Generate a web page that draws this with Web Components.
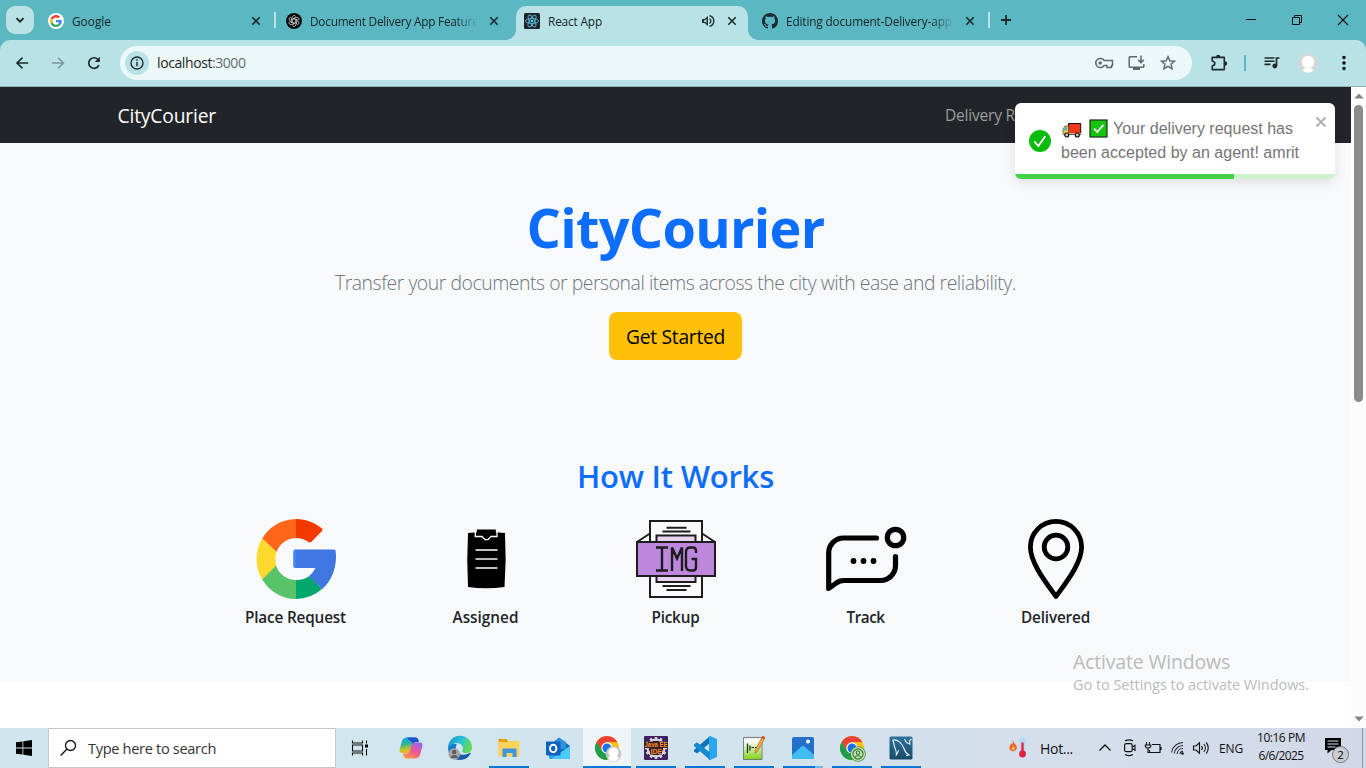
<!DOCTYPE html>
<html lang="en">
<head>
<meta charset="utf-8">
<title>React App</title>
<style>
html,body{margin:0;height:768px;overflow:hidden;background:#fff}
body{font-family:"Open Sans","Noto Sans",sans-serif;color:#1f1f1f}
</style>
</head>
<body>
<desktop-screen></desktop-screen>
<script>
const define = (name, html, after) => {
  const t = document.createElement('template');
  t.innerHTML = html;
  customElements.define(name, class extends HTMLElement {
    connectedCallback() {
      if (this.shadowRoot) return;
      this.attachShadow({mode: 'open'}).appendChild(t.content.cloneNode(true));
      if (after) after(this, this.shadowRoot);
    }
  });
};

/* Text run tracked so that it fills a given width */
define('fit-text', `<style>:host{display:inline-block;white-space:nowrap;flex:none}span{display:inline-block}</style><span><slot></slot></span>`, (el, r) => {
  const w = +el.getAttribute('w'), s = r.querySelector('span');
  const n = el.textContent.length;
  const nat = s.getBoundingClientRect().width;
  if (w && nat) { s.style.letterSpacing = ((w - nat) / n).toFixed(3) + 'px'; el.style.width = w + 'px'; }
});

const G4 = '<path fill="#ea4335" d="M24 9.5c3.5 0 6.7 1.2 9.2 3.6l6.9-6.9C35.9 2.4 30.5 0 24 0 14.6 0 6.5 5.4 2.6 13.2l8 6.2C12.4 13.7 17.7 9.5 24 9.5z"/><path fill="#4285f4" d="M47 24.6c0-1.6-.2-3.100-.4-4.600H24v9h12.900c-.6 3-2.300 5.500-4.800 7.200l7.700 6C44.400 38 47 32 47 24.600z"/><path fill="#fbbc05" d="M10.500 28.600a14.500 14.500 0 010-9.200l-8-6.200a24 24 0 000 21.600z"/><path fill="#34a853" d="M24 48c6.500 0 11.900-2.100 15.900-5.800l-7.700-6c-2.200 1.500-4.900 2.300-8.200 2.300-6.300 0-11.600-4.200-13.500-9.900l-8 6.200C6.500 42.600 14.600 48 24 48z"/>';
const CHROME = '<circle cx="12" cy="12" r="12" fill="#fbc116"/><path d="M1.600 6A12 12 0 0 1 22.400 6H12L7 14.800z" fill="#ea4335"/><path d="M1.600 6A12 12 0 0 0 12 24l5-9-5 2-5-2.300z" fill="#1e9e4a"/><circle cx="12" cy="12" r="5.700" fill="#fff"/><circle cx="12" cy="12" r="4.500" fill="#1a73e8"/>';
const rot = (n, step, s) => Array.from({length:n}, (_,i) => `<g transform="rotate(${i*step} 12 12)">${s}</g>`).join('');
const ICONS = {
  down: [12,12,'<path d="M2.500 4.200L6 7.700l3.500-3.500" fill="none" stroke="#1c2526" stroke-width="1.900"/>'],
  gfav: [16,16,`<circle cx="8" cy="8" r="8" fill="#fff"/><g transform="translate(2 2) scale(.25)">${G4}</g>`],
  oai: [16,16,`<circle cx="8" cy="8" r="8" fill="#0a0a0a"/><g transform="scale(.6667)" fill="none" stroke="#d8d8d8" stroke-width="1.100">${rot(6,60,'<path d="M9.200 10.300V6.800a3 3 0 0 1 5.200-2l.2.200M14.800 10.400L11 8.200 14.300 6.300"/>')}</g>`],
  react: [16,16,'<rect width="16" height="16" rx="1.500" fill="#20232a"/><g fill="none" stroke="#58b6d0" stroke-width=".9"><ellipse cx="8" cy="8" rx="6.600" ry="2.500"/><ellipse cx="8" cy="8" rx="6.600" ry="2.500" transform="rotate(60 8 8)"/><ellipse cx="8" cy="8" rx="6.600" ry="2.500" transform="rotate(120 8 8)"/></g><circle cx="8" cy="8" r="1.300" fill="#61dafb"/>'],
  github: [16,16,'<path fill="#1d2b33" d="M8 0C3.580 0 0 3.580 0 8c0 3.540 2.290 6.530 5.470 7.590.4.070.55-.17.55-.38 0-.19-.010-.82-.010-1.490-2.010.37-2.530-.49-2.690-.94-.090-.23-.48-.94-.82-1.130-.28-.15-.68-.52-.010-.53.63-.010 1.080.58 1.230.82.72 1.210 1.870.87 2.330.66.070-.52.28-.87.51-1.070-1.780-.2-3.640-.89-3.640-3.950 0-.87.31-1.590.82-2.150-.080-.2-.36-1.020.080-2.120 0 0 .67-.21 2.200.82.64-.18 1.320-.27 2-.27s1.360.090 2 .27c1.530-1.040 2.200-.82 2.200-.82.44 1.100.16 1.920.080 2.120.51.56.82 1.270.82 2.150 0 3.070-1.870 3.750-3.650 3.950.29.25.54.73.54 1.480 0 1.070-.010 1.930-.010 2.200 0 .21.15.46.55.38A8.010 8.010 0 0 0 16 8c0-4.420-3.580-8-8-8z"/>'],
  x: [12,12,'<path d="M2.300 2.300l7.400 7.400M9.700 2.300L2.300 9.700" stroke="#1c2a2c" stroke-width="1.600"/>'],
  spk: [14,14,'<path d="M1 5h2.500L7 2v10L3.500 9H1z" fill="#1f3336"/><path d="M3 6.300h1l1.500-1.500v4.400L4 7.700H3z" fill="#b8e2e5"/><path d="M8.500 4.500a3 3 0 0 1 0 5M8.500 1.800a5.300 5.300 0 0 1 0 10.400" fill="none" stroke="#1f3336" stroke-width="1.400"/>'],
  plus: [12,12,'<path d="M6 1v10M1 6h10" stroke="#1c2a2c" stroke-width="1.800"/>'],
  min: [12,12,'<path d="M1 5.500h10" stroke="#111" stroke-width="1"/>'],
  restore: [12,12,'<path d="M1.500 3.500h7v7h-7zM3.500 3.500v-2h7v7h-2" fill="none" stroke="#111"/>'],
  wclose: [12,12,'<path d="M1 1l10 10M11 1L1 11" stroke="#111" stroke-width="1.100"/>'],
  back: [16,16,'<path d="M14.200 8H3.200M8.500 2.700L3 8l5.500 5.300" fill="none" stroke="#1f2b2d" stroke-width="1.600"/>'],
  fwd: [16,16,'<path d="M2 8h11M8 2.700L13.500 8 8 13.300" fill="none" stroke="#7b979b" stroke-width="1.500"/>'],
  reload: [16,16,'<path d="M12.900 10.200A5.300 5.300 0 1 1 12.400 5" fill="none" stroke="#1f2b2d" stroke-width="1.700"/><path d="M13.900 1.800V7H8.700z" fill="#1f2b2d"/>'],
  info: [24,24,'<circle cx="12" cy="12" r="12" fill="#b8e2e5"/><circle cx="12" cy="12" r="6" fill="none" stroke="#203033" stroke-width="1.400"/><path d="M12 11v4.300M12 8.200v1.600" stroke="#203033" stroke-width="1.500"/>'],
  key: [20,14,'<path d="M10.200 4.500A4.600 4.600 0 1 0 10.200 9.500H13v2h4.500v-2H18.500v-5z" fill="none" stroke="#5a696c" stroke-width="1.500"/><circle cx="6.200" cy="7" r="1.700" fill="#5a696c"/>'],
  install: [18,16,'<path d="M9 1.700H2A1 1 0 0 0 1.200 2.500v9a1 1 0 0 0 .8.800h13a1 1 0 0 0 .8-.8V9" fill="none" stroke="#5a696c" stroke-width="1.500"/><path d="M5 12.500h7v2.500H5z" fill="#5a696c"/><path d="M13 .5v7M10.100 4.800L13 7.700l2.900-2.900" fill="none" stroke="#5a696c" stroke-width="1.500"/>'],
  star: [16,16,'<path d="M8 1.600l1.900 4.200 4.600.4-3.500 3 1.100 4.500L8 11.300l-4.100 2.400L5 9.200l-3.500-3 4.600-.4z" fill="none" stroke="#5a696c" stroke-width="1.400"/>'],
  ext: [18,18,'<path d="M2.200 3.400H14.300V15.600H2.200V12q2.600-.5 2.600-2.500T2.200 7z" fill="none" stroke="#1f2b2d" stroke-width="1.600" stroke-linejoin="round"/><path d="M6 3a2.200 2.200 0 0 1 4.400 0zM15 7.300a2.200 2.200 0 0 1 0 4.400z" fill="#1f2b2d"/>'],
  media: [16,14,'<path d="M.5 2h10M.5 5.200h10M.5 8.400h6" stroke="#1f2b2d" stroke-width="1.600"/><path d="M12.500 10V2H15.500" fill="none" stroke="#1f2b2d" stroke-width="1.700"/><circle cx="10.800" cy="10" r="2.400" fill="#1f2b2d"/>'],
  avatar: [20,20,'<circle cx="10" cy="10" r="10" fill="#d6d6d6"/><circle cx="10" cy="9" r="6.200" fill="#fff"/><path d="M4.500 17.800c1-4.500 10-4.500 11 0A9.500 9.500 0 0 1 4.500 17.800z" fill="#fff"/>'],
  dots: [6,16,'<circle cx="3" cy="2.500" r="1.700"/><circle cx="3" cy="8" r="1.700"/><circle cx="3" cy="13.500" r="1.700"/>'],
  ok: [22,22,'<circle cx="11" cy="11" r="11" fill="#07bc0c"/><path d="M5.300 11.300l4 4.700 7-9.800" fill="none" stroke="#fff" stroke-width="1.900"/>'],
  truck: [20,16,'<path d="M6.500 1.500h12.200v11H6.500z" fill="#f03a17" stroke="#111"/><path d="M1 7L3 4h3.500v8.500H1z" fill="#ffc83d" stroke="#555" stroke-width=".8"/><path d="M1.800 7.500l1.700-2.500H5v3.500H1.800z" fill="#39b9e6"/><path d="M1 11h18v1.600H1z" fill="#d3ab82"/><circle cx="4.700" cy="13" r="2" fill="#ccc" stroke="#111" stroke-width="1.200"/><circle cx="15.300" cy="13" r="2" fill="#ccc" stroke="#111" stroke-width="1.200"/>'],
  check: [20,20,'<rect x="1" y="1" width="17" height="17" fill="#16c60c" stroke="#1c301c" stroke-width="1.200"/><path d="M5 9.500l3.200 3.500 6.200-7.200" fill="none" stroke="#fff" stroke-width="1.800"/>'],
  tclose: [12,12,'<path d="M1.500 1.500l9 9M10.500 1.500l-9 9" stroke="#b2b2b2" stroke-width="2.100"/>'],
  google: [80,80,`<g>
    <path d="M40 0A40 40 0 0 0 6.200 19.500L20.500 33A21 21 0 0 1 40 19z" fill="#ff6619"/>
    <path d="M40 0C50 0 59.500 4 66 9.500Q67 10.800 66 12L55.500 22.800Q54 24 52.500 23A22 22 0 0 0 40 19z" fill="#f23a00"/>
    <path d="M6.200 19.500A40 40 0 0 0 6.200 60.500L20.500 47A22 22 0 0 1 20.500 33z" fill="#ffda2d"/>
    <path d="M6.200 60.500A40 40 0 0 0 40 80V61A21 21 0 0 1 20 46.500z" fill="#59c36a"/>
    <path d="M40 80A40 40 0 0 0 66 70L53.500 57A22 22 0 0 1 40 61z" fill="#00a66c"/>
    <path d="M39.500 30.500H78Q79.500 30.500 79.700 32C81.500 47 76 62 66 70.200L53 57Q57 54 59.500 49H39.500Q37.500 49 37.500 47V32.500Q37.500 30.500 39.500 30.500z" fill="#4175df"/>
    <path d="M40 30.500h-.5Q37.500 30.500 37.500 32.500V47Q37.500 49 39.500 49h.5z" fill="#4086f4"/></g>`],
  clip: [80,80,'<path d="M22 14Q40 12 59 14Q60.500 41 58.500 68Q40 70.500 22 68Q20.500 41 22 14z"/><path d="M29.300 11v6.500H36l3 3.200h3l3-3.200h6V11" fill="none" stroke="#fff" stroke-width="1.300"/><path d="M30.800 10.500h19v5.500H44l-3 2.800h-1L37 16h-6.200z"/><path d="M29.500 31h22M29.500 49h22" stroke="#fff" stroke-width="1.600"/><path d="M29.500 40h22" stroke="#ccc" stroke-width="1.800"/>'],
  img: [80,80,'<g stroke="#1d1d1d" stroke-width="2" fill="none"><path d="M14 14.500L1 23M66 14.500L79 23"/><path d="M14 2h52v76H14z" fill="#fafafc"/><path d="M20.500 16.500h39v46.500h-39z" fill="#e8d4f2"/><path d="M30.500 8.700h20M26.500 12.500h28M26.500 67h28M30.500 71h20"/><path d="M1 23h78v34H1z" fill="#bd87de"/><path d="M20 28.500h12M20 51.500h12M26 28.500v23M36 52V28.500l5 11 5-11V52M60 34V32q0-3.500-3-3.500h-2.500Q50 28.500 50 33v14q0 4.500 4.500 4.500H57q3 0 3-3.500v-8h-4.500" stroke-width="2.400"/></g>'],
  track: [80,80,'<g fill="none" stroke="#000" stroke-width="5.200" stroke-linecap="round" stroke-linejoin="round"><path d="M50.500 19H17.500A14.800 14.800 0 0 0 2.700 34V69.500L11 63.500Q14 61.500 18 61.500H54.500A15 15 0 0 0 69.500 46.500V37.500"/><circle cx="69.500" cy="18.500" r="8.200"/></g><circle cx="27.500" cy="42" r="2.900"/><circle cx="37.500" cy="42" r="2.900"/><circle cx="47.500" cy="42" r="2.900"/>'],
  pin: [80,80,'<g fill="none" stroke="#000" stroke-width="4.800"><path d="M40 77.500C32 66 14.400 45 14.400 28a25.600 25.600 0 0 1 51.200 0C65.600 45 48 66 40 77.500z" stroke-linejoin="round"/><circle cx="40" cy="28" r="11.800"/></g>'],
  win: [16,16,'<path d="M0 2.300l6.500-.9v6.200H0zM7.300 1.300L16 0v7.600H7.300zM0 8.400h6.500v6.200L0 13.700zM7.300 8.400H16V16l-8.700-1.300z"/>'],
  search: [18,18,'<circle cx="10.500" cy="6.500" r="5" fill="none" stroke="#111" stroke-width="1.300"/><path d="M6.800 10.200L.6 16.500" stroke="#111" stroke-width="1.300"/>'],
  task: [18,16,'<path d="M.5 .5v2.500h10V.5M.5 15.500V13h10v2.500M.5 5h10v6H.5zM14.500 .5v3M14.500 9v6.500" fill="none" stroke="#111" stroke-width="1.100"/><path d="M13 4.500h3v3h-3z"/>'],
  copilot: [24,24,'<defs><linearGradient id="a" x1="0" y1="0" x2=".2" y2="1"><stop offset="0" stop-color="#16a6e8"/><stop offset=".45" stop-color="#2bb39a"/><stop offset=".8" stop-color="#c3c629"/><stop offset="1" stop-color="#f0b429"/></linearGradient><linearGradient id="b" x1=".7" y1="0" x2=".2" y2="1"><stop offset="0" stop-color="#9d62ec"/><stop offset=".5" stop-color="#ef5792"/><stop offset="1" stop-color="#ff9a3f"/></linearGradient></defs><path d="M8 1.500h8.500q2 0 2.600 2l.8 2.500h-3q-2 0-2.600 2l-2 6.500q-.8 2.500-3.200 2.500H3q-3 0-2.300-4L3 5Q4.200 1.500 8 1.500z" fill="url(#a)"/><path d="M8 1.500h8.500q2 0 2.600 2l.8 2.500h-3q-2 0-2.600 2L14 9q-.6-3-2.500-4T8 1.500z" fill="#1b4ed1"/><path d="M16 22.500H7.500q-2 0-2.600-2L4 17.500h4q2 0 2.600-2l2-6.500q.8-2.500 3.200-2.500H21q3 0 2.300 4L21 19q-1.200 3.500-5 3.500z" fill="url(#b)"/>'],
  edge: [24,24,'<defs><linearGradient id="e" x1="0" y1="0" x2="1" y2=".3"><stop offset="0" stop-color="#1a8fd8"/><stop offset=".6" stop-color="#2cc4d4"/><stop offset="1" stop-color="#62d957"/></linearGradient><linearGradient id="f" x2="1" y2="1"><stop stop-color="#1b84d6"/><stop offset="1" stop-color="#134f9c"/></linearGradient></defs><path d="M0 12C1 8 5 6.500 9 8.500 6.500 11 7.500 17 13 18.500q5 1 8.500-1.500c1-.5 1.500 0 1 .8A12 12 0 0 1 12 24 12 12 0 0 1 0 12z" fill="url(#f)"/><path d="M0 12A12 12 0 0 1 24 11.500c0 4-3 5.500-6 5.500s-4.500-1-3.500-2.500C16.500 10 12 6.500 7.500 7 3 8 .5 11 0 12z" fill="url(#e)"/><circle cx="6.200" cy="18" r="5.800" fill="#a5a5a5"/><circle cx="6.200" cy="16" r="2.200" fill="#5b5b5b"/><path d="M2.500 22c.5-4 7-4 7.500 0z" fill="#5b5b5b"/>'],
  folder: [24,24,'<path d="M1.500 3h8l1.500 2v3H1.500z" fill="#dfa000"/><path d="M1.500 6h9l1.500-1H22.500v15.500h-21z" fill="#ffd25d"/><path d="M5.500 12.500h14v8.500h-4v-4h-6v4h-4z" fill="#3a96dd"/>'],
  outlook: [24,24,'<path d="M3 10L13 1.500 24 10v11q0 2-2 2H5q-2 0-2-2z" fill="#1a67bd"/><path d="M7 6.500L13.500 2 20 6v7H7z" fill="#2f92dc"/><path d="M3 11l10 7L24 10v11q0 2-2 2H5q-2 0-2-2z" fill="#28a7ea"/><path d="M24 10L6 22.500q0 .5 1 .5h15q2 0 2-2z" fill="#48cbf6"/><rect x="0" y="5.500" width="14.500" height="14" rx="1" fill="#0f62bd"/><ellipse cx="7.200" cy="12.500" rx="3.200" ry="3.700" fill="none" stroke="#fff" stroke-width="2"/>'],
  chrome1: [24,24,`${CHROME}<circle cx="18.500" cy="18" r="7.800" fill="#c4c4c4"/><circle cx="18.500" cy="16.500" r="5" fill="#fff"/><path d="M13 22.500c1-4 10-4 11 0a7 7 0 0 1-11 0z" fill="#fff"/>`],
  java: [24,24,`<rect width="24" height="24" rx="1" fill="#40205e"/><g fill="#d9d5dc">${rot(12,30,'<path d="M10.700 1h2.600v4h-2.600z"/>')}</g><circle cx="12" cy="12" r="8.500" fill="none" stroke="#d9d5dc" stroke-width="2"/><circle cx="12" cy="12" r="7" fill="#251b27"/><path d="M0 5.500h24V12H0zM6 12H18v6.500H6z" fill="#33222b"/><g font-family="Liberation Sans" font-weight="bold" fill="#ff8d23"><text x=".5" y="11.300" font-size="7.500" textLength="23" lengthAdjust="spacingAndGlyphs">Java EE</text><text x="6.500" y="18" font-size="7.500" textLength="11.500" lengthAdjust="spacingAndGlyphs">IDE</text></g>`],
  vscode: [24,24,'<path d="M17 0v7L4 17.500 1 15.500v-1.500z" fill="#1274b7"/><path d="M17 24v-7L4 6.500 1 8.500V10z" fill="#168bd0"/><path d="M17 0l7 3v18l-7 3-1-1.500V1.500z" fill="#2aa7ef"/><path d="M1 8.500L4 6.500l13 10V24z" fill="#168bd0"/>'],
  npp: [24,24,'<defs><linearGradient id="n" x2="0" y2="1"><stop offset=".2" stop-color="#f8faf3"/><stop offset="1" stop-color="#7fd414"/></linearGradient></defs><path d="M1.500 1.500h18.500V23.500h-18.500z" fill="url(#n)" stroke="#667" stroke-width=".8"/><path d="M2.500 1.500h16" stroke="#888" stroke-width="1.600" stroke-dasharray="1 1"/><path d="M5.500 7.500v9.500M8 9.500v5" stroke="#203020" stroke-width="1.300"/><path d="M9.500 11.500h2.500M13 11.500h2.500" stroke="#203020" stroke-width="1.200"/><path d="M20.500 0l2.500 1.500-7 13.500-3 2.500.5-4z" fill="#f2a93b" stroke="#9b671b" stroke-width=".6"/><path d="M20.500 0l2.500 1.500-1 1.900-2.500-1.500z" fill="#df4338"/>'],
  photos: [24,24,'<rect x="1" y="1" width="22" height="22" rx="2" fill="#246fca"/><path d="M1 19L10.500 10.500q1.500-1.200 3 0L23 19v2q0 2-2 2H3q-2 0-2-2z" fill="#42bdf4"/><circle cx="17" cy="5.500" r="2" fill="#fff"/>'],
  chrome2: [24,24,`${CHROME}<circle cx="18" cy="18" r="7.800" fill="#4c8a45"/><circle cx="18" cy="18" r="7" fill="#c9e3b6"/><circle cx="18" cy="18" r="5" fill="none" stroke="#3f8440" stroke-width="1.300"/><circle cx="18" cy="16.700" r="1.700" fill="none" stroke="#3f8440" stroke-width="1.200"/><path d="M15 21.200q3-3 6 0" fill="none" stroke="#3f8440" stroke-width="1.200"/>`],
  mysql: [24,24,'<defs><linearGradient id="m" x2="0" y2="1"><stop stop-color="#2f7399"/><stop offset="1" stop-color="#174b69"/></linearGradient></defs><rect x=".5" y=".5" width="23" height="23" rx="1.500" fill="url(#m)"/><path d="M3.500 4c5-1 9.500 3 11.500 8.500.8 3 2.500 5 5 6.500l-3 .5M3.500 4c2 2 1 5 2.500 8 1.500 3 1.500 5 1.300 7 2-2.500 1.500-4.500 2.700-4.500" fill="none" stroke="#e8f2f6" stroke-width="1.100"/><path d="M15.500 3l2 3.500 3.500 1.500-.5-3 2-2" fill="none" stroke="#d8e8ee" stroke-width="1.100"/>'],
  hot: [20,22,'<path d="M4 3.500c.5 3 4 4 4 7.500a4 4 0 0 1-7.500 1C0 9 2 8.500 1.800 6c1 .5 1.500 1 1.700 2C4.500 6.500 3 5 4 3.500z" fill="#f4622c"/><path d="M4.300 8.500c.3 1.500 1.700 2 1.500 3.300-.5 2-3.300 1.600-3.300 0s1.600-1.500 1.800-3.300z" fill="#ffc247"/><rect x="10.500" y="0" width="6" height="18" rx="3" fill="#b5daf3"/><path d="M13.500 5.500v12" stroke="#e8263e" stroke-width="2.400"/><circle cx="13.500" cy="17" r="3.400" fill="#df1f3e"/>'],
  chev: [14,10,'<path d="M1.500 7.500L7 2l5.500 5.500" fill="none" stroke="#111" stroke-width="1.300"/>'],
  meet: [14,18,'<rect x="2.600" y="4.700" width="7.600" height="8" rx="1.800" fill="none" stroke="#111" stroke-width="1.200"/><path d="M10.500 8l2.500-1.700v5L10.500 9.800M3 2q4-2.300 8 0M3 15.500q4 2.300 8 0" fill="none" stroke="#111" stroke-width="1.100"/>'],
  batt: [18,14,'<path d="M8 3.500h8v8H5.500V9M17 6v3" fill="none" stroke="#111" stroke-width="1.200"/><path d="M2.500 1v2.500M5.500 1v2.500M1.300 4h5.500v1.500L5.300 7H2.800L1.300 5.500zM4 7v4.500h1.500" fill="none" stroke="#111" stroke-width="1.100"/>'],
  wifi: [14,14,'<g fill="none" stroke="#222" stroke-width="1.100"><path d="M1.500 11.500A11.500 11.500 0 0 1 13 1.500M4.200 12.500A9 9 0 0 1 13 4.500M7 13A6.200 6.200 0 0 1 13 7.500M9.800 13a3.500 3.500 0 0 1 3.200-2.800"/></g><circle cx="12.500" cy="12.500" r="1.200"/>'],
  vol: [18,14,'<path d="M1.500 5H4L7.500 1.800v10.400L4 9H1.500z" fill="none" stroke="#111" stroke-width="1.100"/><path d="M9.500 5a3 3 0 0 1 0 4M11.800 3a6 6 0 0 1 0 8M14.200 1.300a9 9 0 0 1 0 11.400" fill="none" stroke="#111" stroke-width="1.100"/>'],
  notif: [26,26,'<path d="M0 1h16v12H6.500L2.500 16.500V13H0z"/><path d="M2.500 4h11M2.500 7h11M2.500 10h8" stroke="#dbe2ee" stroke-width="1.100"/><circle cx="15.500" cy="17.500" r="8" fill="#c9ccd2" stroke="#777" stroke-width="1"/><text x="15.500" y="21.600" font-size="11.500" text-anchor="middle" font-family="Open Sans" fill="#000">2</text>'],
  up: [10,6,'<path d="M5 .5L9.700 5.500H.3z" fill="#858585"/>'],
  dn: [10,6,'<path d="M5 5.500L9.700.5H.3z" fill="#858585"/>']
};
define('ui-icon', `<style>:host{display:inline-block;flex:none;line-height:0}svg{display:block;overflow:visible}</style>`, (el, r) => {
  const [w, h, body] = ICONS[el.getAttribute('name')];
  r.innerHTML += `<svg width="${w}" height="${h}" viewBox="0 0 ${w} ${h}">${body}</svg>`;
});

define('browser-tab', `<style>
:host{display:block;width:238px;height:34px;flex:none;font-size:11.800px;line-height:30px;color:#142427}
.t{box-sizing:border-box;position:relative;width:232px;height:34px;display:flex;padding:0 10px 5px 8px;align-items:center}
:host([active]) .t{background:#b8e2e5;border-radius:10px 10px 0 0;width:232px}
:host([active]) .t:before,:host([active]) .t:after{content:"";position:absolute;bottom:0;width:10px;height:10px}
:host([active]) .t:before{left:-10px;background:radial-gradient(circle at 0 0,transparent 9.500px,#b8e2e5 10px)}
:host([active]) .t:after{right:-10px;background:radial-gradient(circle at 100% 0,transparent 9.500px,#b8e2e5 10px)}
.n{margin-left:8px;width:167px;overflow:hidden;flex:none;height:29px}
:host([fade]) .n{-webkit-mask-image:linear-gradient(90deg,#000 145px,transparent 168px);mask-image:linear-gradient(90deg,#000 145px,transparent 168px)}
:host([active]) .n{width:153px}
.x{margin-left:auto}.bar{position:absolute;left:234px;top:6px;width:2px;height:16px;background:#b8e2e5;display:none}
:host([sep]) .bar{display:block}
</style><div class="t"><slot name="icon"></slot><div class="n"><slot></slot></div><slot name="audio"></slot><ui-icon class="x" name="x"></ui-icon><i class="bar"></i></div>`);

define('tab-strip', `<style>
:host{display:flex;height:40px;background:#5bb8c2;box-sizing:border-box;padding:6px 0 0 6px}
.d{width:28px;height:28px;border-radius:9px;background:#b8e2e5;margin-right:6px;display:flex;align-items:center;justify-content:center;flex:none}
.p{margin:8px 0 0 8px}
.w{margin-left:auto;display:flex;gap:34px;padding:8px 17px 0 0}
</style>
<div class="d"><ui-icon name="down"></ui-icon></div>
<browser-tab sep><ui-icon slot="icon" name="gfav"></ui-icon><fit-text w="39">Google</fit-text></browser-tab>
<browser-tab fade><ui-icon slot="icon" name="oai"></ui-icon><fit-text w="174">Document Delivery App Features</fit-text></browser-tab>
<browser-tab active><ui-icon slot="icon" name="react"></ui-icon><fit-text w="54">React App</fit-text><ui-icon slot="audio" name="spk"></ui-icon></browser-tab>
<browser-tab fade sep><ui-icon slot="icon" name="github"></ui-icon><fit-text w="170">Editing document-Delivery-app/</fit-text></browser-tab>
<ui-icon class="p" name="plus"></ui-icon>
<div class="w"><ui-icon name="min"></ui-icon><ui-icon name="restore"></ui-icon><ui-icon name="wclose"></ui-icon></div>`);

define('tool-bar', `<style>
:host{display:block;background:#5bb8c2;height:47px}
.b{height:46px;border-bottom:1px solid #8fb0b4;background:#b8e2e5;border-radius:10px 10px 0 0;display:flex;align-items:center;padding-left:14px;gap:20px}
.o{margin-left:-2px;box-sizing:border-box;width:1072px;height:34px;border-radius:17px;background:#ecf8f8;display:flex;align-items:center;padding:0 16px 0 5px}
.u{margin-left:8px;font-size:14px;display:flex;line-height:30px}.g{color:#5e6d70}
.r{margin-left:auto;display:flex;gap:14px;align-items:center}
.e{display:flex;align-items:center;margin-left:-2px}
.l{width:2px;height:16px;background:#5bb8c2;margin:0 18px 0 16px}
</style><div class="b"><ui-icon name="back"></ui-icon><ui-icon name="fwd"></ui-icon><ui-icon name="reload"></ui-icon>
<div class="o"><ui-icon name="info"></ui-icon><div class="u"><fit-text w="55">localhost</fit-text><fit-text class="g" w="33.500">:3000</fit-text></div><div class="r"><ui-icon name="key"></ui-icon><ui-icon name="install"></ui-icon><ui-icon name="star"></ui-icon></div></div>
<div class="e"><ui-icon name="ext"></ui-icon><i class="l"></i><ui-icon name="media"></ui-icon><ui-icon name="avatar" style="margin:0 23px 0 18px"></ui-icon><ui-icon name="dots"></ui-icon></div></div>`);

define('toast-card', `<style>
:host{display:block;width:320px;height:76px;background:#fff;border-radius:6px;overflow:hidden;box-shadow:0 4px 12px rgba(0,0,0,.1);font:16px/24px "Liberation Sans",sans-serif;color:#757575;box-sizing:border-box}
.m{height:71px;display:flex;align-items:center;padding-left:14px;box-sizing:border-box;padding-top:5px}
.c{margin-left:10px}.l{display:flex;align-items:center;height:24px}
.x{margin:-38px 0 0 auto;padding-right:8px}
.p{height:5px;background:#cdf2ce}.p i{display:block;height:5px;width:219px;background:#45d048}
</style><div class="m"><ui-icon name="ok"></ui-icon><div class="c"><div class="l"><ui-icon name="truck" style="margin:1px 7px 0 1px"></ui-icon><ui-icon name="check" style="margin-right:4px"></ui-icon><fit-text w="180">Your delivery request has</fit-text></div><div class="l"><fit-text w="238">been accepted by an agent! amrit</fit-text></div></div><ui-icon class="x" name="tclose"></ui-icon></div><div class="p"><i></i></div>`);

define('work-step', `<style>:host{display:flex;width:190px;flex-direction:column;align-items:center;font-size:15.300px;line-height:24px;font-weight:600;color:#212529;gap:6px}</style><slot name="icon"></slot><slot></slot>`);

define('web-page', `<style>
:host{display:grid;grid-template-columns:1351px 15px;height:641px;background:#fff;position:relative}
.nav{height:56px;box-sizing:border-box;background:#212529;display:flex;align-items:center;padding:0 0 0 117.500px;font-size:19.300px;color:#fff}
.nav .k{margin:0 0 0 729px;font-size:15.500px;color:#9b9d9e}
.hero{height:539px;background:#f8f9fb;display:flex;flex-direction:column;align-items:center}
h1{margin:51px 0 0;font-size:54px;line-height:67px;font-weight:700;color:#0d6efd}
.lead{margin-top:7px;font-size:19.400px;line-height:30px;font-weight:300;color:#6c757d}
.btn{margin-top:14px;width:133px;height:48px;border-radius:8px;background:#ffc107;color:#000;font-size:19.300px;line-height:50px;text-align:center}
h2{margin:97px 0 0;font-size:31px;line-height:38px;font-weight:600;color:#0d6efd}
.row{display:flex;margin-top:24px}
.sb{background:#fcfcfc;display:flex;flex-direction:column;align-items:center;padding:6px 0 6px}
.th{width:9px;height:297px;border-radius:5px;background:#8b8b8b;margin-top:6px}
toast-card{position:absolute;left:1015px;top:16px}
.wm{position:absolute;left:1073px;top:562px;color:#b9bbbd;font-size:19.500px;line-height:26px}
.wm .s{font-size:14.500px;line-height:19px}
.wm fit-text{display:block}
</style>
<div><div class="nav"><fit-text w="98.500">CityCourier</fit-text><fit-text class="k" w="70">Delivery R</fit-text></div>
<div class="hero"><h1><fit-text w="298">CityCourier</fit-text></h1>
<div class="lead"><fit-text w="681">Transfer your documents or personal items across the city with ease and reliability.</fit-text></div>
<div class="btn"><fit-text w="99">Get Started</fit-text></div>
<h2><fit-text w="197">How It Works</fit-text></h2>
<div class="row">
<work-step><ui-icon slot="icon" name="google"></ui-icon><fit-text w="101">Place Request</fit-text></work-step>
<work-step><ui-icon slot="icon" name="clip"></ui-icon><fit-text w="66">Assigned</fit-text></work-step>
<work-step><ui-icon slot="icon" name="img"></ui-icon><fit-text w="48">Pickup</fit-text></work-step>
<work-step><ui-icon slot="icon" name="track"></ui-icon><fit-text w="38">Track</fit-text></work-step>
<work-step><ui-icon slot="icon" name="pin"></ui-icon><fit-text w="69">Delivered</fit-text></work-step>
</div></div></div>
<div class="sb"><ui-icon name="up"></ui-icon><div class="th"></div><ui-icon name="dn" style="margin-top:auto"></ui-icon></div>
<toast-card></toast-card>
<div class="wm"><fit-text w="157">Activate Windows</fit-text><fit-text class="s" w="236">Go to Settings to activate Windows.</fit-text></div>`);

define('task-app', `<style>
:host{display:flex;width:48px;height:40px;align-items:center;justify-content:center;box-sizing:border-box;position:relative}
i{position:absolute;bottom:0;left:4px;width:40px;height:2px;background:#0078d7;display:none}
:host([open]) i{display:block}
:host([multi]) i{background:linear-gradient(90deg,#0078d7 32px,#78b4e4 32px)}
:host([front]){background:#edf5f8}:host([front]) i{left:0;width:48px}
</style><slot></slot><i></i>`);

define('task-bar', `<style>
:host{display:flex;height:40px;background:linear-gradient(90deg,#cfe6ee,#d2e5ee 45%,#d4dfeb 75%,#d3d8e9);color:#111;align-items:center}
.st{width:48px;display:flex;justify-content:center}
.s{box-sizing:border-box;width:288px;height:40px;background:#fff;border:1px solid #c6c9ca;display:flex;align-items:center;padding-left:11px;font-size:14.600px;color:#333}
.s fit-text{margin-left:10px}
.tv{width:51px;display:flex;justify-content:center;box-sizing:border-box;padding-right:1px}
.apps{display:flex;gap:1px}
.tray{display:flex;margin-left:84px;align-items:center;height:40px;font-size:12px}
.c{width:24px;display:flex;justify-content:center}
.k{margin-left:14px;width:48px;line-height:18px;text-align:center;margin-top:-2px}
.e{width:1px;height:40px;background:#8d98a8;margin-left:11px}
</style>
<div class="st"><ui-icon name="win"></ui-icon></div>
<div class="s"><ui-icon name="search"></ui-icon><fit-text w="128">Type here to search</fit-text></div>
<div class="tv"><ui-icon name="task"></ui-icon></div>
<div class="apps">
<task-app><ui-icon name="copilot"></ui-icon></task-app><task-app><ui-icon name="edge"></ui-icon></task-app><task-app open><ui-icon name="folder"></ui-icon></task-app><task-app><ui-icon name="outlook"></ui-icon></task-app><task-app open front><ui-icon name="chrome1"></ui-icon></task-app><task-app open><ui-icon name="java"></ui-icon></task-app><task-app open><ui-icon name="vscode"></ui-icon></task-app><task-app open><ui-icon name="npp"></ui-icon></task-app><task-app open multi><ui-icon name="photos"></ui-icon></task-app><task-app open><ui-icon name="chrome2"></ui-icon></task-app><task-app open><ui-icon name="mysql"></ui-icon></task-app>
</div>
<div class="tray"><ui-icon name="hot" style="margin-right:11px"></ui-icon><fit-text w="33" style="font-size:14px;margin-right:20px">Hot...</fit-text>
<div class="c"><ui-icon name="chev"></ui-icon></div><div class="c"><ui-icon name="meet"></ui-icon></div><div class="c"><ui-icon name="batt"></ui-icon></div><div class="c"><ui-icon name="wifi"></ui-icon></div><div class="c"><ui-icon name="vol"></ui-icon></div>
<fit-text w="24" style="margin-left:6px">ENG</fit-text>
<div class="k"><fit-text w="48">10:16 PM</fit-text><fit-text w="45">6/6/2025</fit-text></div>
<ui-icon name="notif" style="margin:3px 0 0 20px"></ui-icon><i class="e"></i></div>`);

define('desktop-screen', `<style>:host{display:block;width:1366px;height:768px;overflow:hidden}</style><tab-strip></tab-strip><tool-bar></tool-bar><web-page></web-page><task-bar></task-bar>`);
</script>
</body>
</html>
